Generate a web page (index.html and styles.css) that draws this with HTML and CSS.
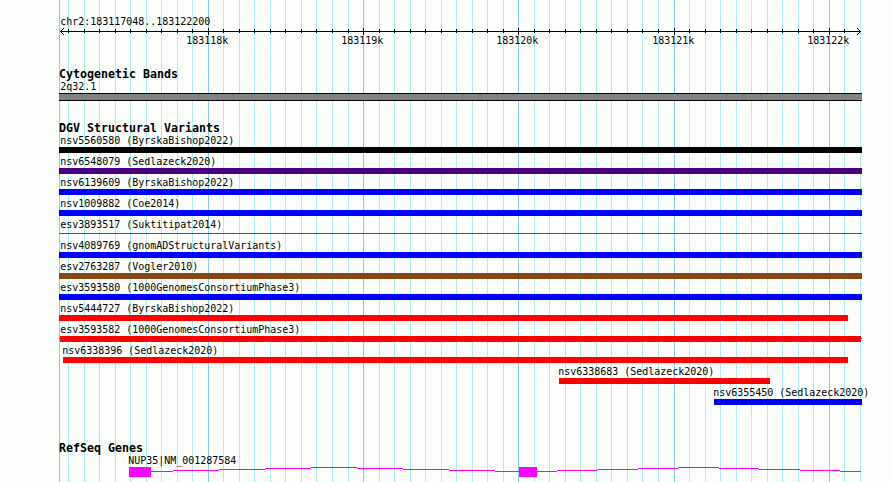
FILE: index.html
```
<!DOCTYPE html>
<html lang="en">
<head>
<meta charset="utf-8">
<title>chr2:183117048..183122200</title>
<link rel="stylesheet" href="styles.css">
</head>
<body>
<main class="browser">
  <svg class="grid" width="890" height="482" shape-rendering="crispEdges" aria-hidden="true">
    <path class="minor" d="M68.5 0V482M84.5 0V482M99.5 0V482M115.5 0V482M130.5 0V482M146.5 0V482M161.5 0V482M177.5 0V482M192.5 0V482M223.5 0V482M239.5 0V482M254.5 0V482M270.5 0V482M285.5 0V482M301.5 0V482M316.5 0V482M332.5 0V482M348.5 0V482M379.5 0V482M394.5 0V482M410.5 0V482M425.5 0V482M441.5 0V482M456.5 0V482M472.5 0V482M487.5 0V482M503.5 0V482M534.5 0V482M549.5 0V482M565.5 0V482M580.5 0V482M596.5 0V482M611.5 0V482M627.5 0V482M642.5 0V482M658.5 0V482M689.5 0V482M705.5 0V482M720.5 0V482M736.5 0V482M751.5 0V482M767.5 0V482M782.5 0V482M798.5 0V482M813.5 0V482M844.5 0V482M860.5 0V482"/>
    <path class="major" d="M59.5 0V482M208.5 0V482M363.5 0V482M518.5 0V482M674.5 0V482M829.5 0V482"/>
  </svg>

  <header class="ruler">
    <div class="label">chr2:183117048..183122200</div>
    <svg class="axis" width="803" height="20" shape-rendering="crispEdges">
      <path d="M1 4.5H802M9.5 2V6M25.5 2V6M40.5 2V6M56.5 2V6M71.5 2V6M87.5 2V6M102.5 2V6M118.5 2V6M133.5 2V6M164.5 2V6M180.5 2V6M195.5 2V6M211.5 2V6M226.5 2V6M242.5 2V6M257.5 2V6M273.5 2V6M289.5 2V6M320.5 2V6M335.5 2V6M351.5 2V6M366.5 2V6M382.5 2V6M397.5 2V6M413.5 2V6M428.5 2V6M444.5 2V6M475.5 2V6M490.5 2V6M506.5 2V6M521.5 2V6M537.5 2V6M552.5 2V6M568.5 2V6M583.5 2V6M599.5 2V6M630.5 2V6M646.5 2V6M661.5 2V6M677.5 2V6M692.5 2V6M708.5 2V6M723.5 2V6M739.5 2V6M754.5 2V6M785.5 2V6M149.5 1V8M304.5 1V8M459.5 1V8M615.5 1V8M770.5 1V8"/>
      <path d="M2 3.5H3M3 2.5H4M4 1.5H5M2 5.5H3M3 6.5H4M4 7.5H5M800 3.5H801M799 2.5H800M798 1.5H799M800 5.5H801M799 6.5H800M798 7.5H799"/>
      <g class="tick-text">
        <text x="127.3" y="17">183118k</text>
        <text x="282.3" y="17">183119k</text>
        <text x="437.3" y="17">183120k</text>
        <text x="593.3" y="17">183121k</text>
        <text x="748.3" y="17">183122k</text>
      </g>
    </svg>
  </header>

  <section class="track cyto">
    <h2>Cytogenetic Bands</h2>
    <div class="label">2q32.1</div>
    <div class="band"></div>
  </section>

  <section class="track variants">
    <h2>DGV Structural Variants</h2>
    <div class="row"><div class="label">nsv5560580 (ByrskaBishop2022)</div><div class="bar black"></div></div>
    <div class="row"><div class="label">nsv6548079 (Sedlazeck2020)</div><div class="bar purple"></div></div>
    <div class="row"><div class="label">nsv6139609 (ByrskaBishop2022)</div><div class="bar blue"></div></div>
    <div class="row"><div class="label">nsv1009882 (Coe2014)</div><div class="bar blue"></div></div>
    <div class="row"><div class="label">esv3893517 (Suktitipat2014)</div><div class="bar thin"></div></div>
    <div class="row"><div class="label">nsv4089769 (gnomADStructuralVariants)</div><div class="bar blue"></div></div>
    <div class="row"><div class="label">esv2763287 (Vogler2010)</div><div class="bar brown"></div></div>
    <div class="row"><div class="label">esv3593580 (1000GenomesConsortiumPhase3)</div><div class="bar blue"></div></div>
    <div class="row to-848"><div class="label">nsv5444727 (ByrskaBishop2022)</div><div class="bar red"></div></div>
    <div class="row"><div class="label">esv3593582 (1000GenomesConsortiumPhase3)</div><div class="bar red-open"><i></i></div></div>
    <div class="row to-848 indent-4"><div class="label">nsv6338396 (Sedlazeck2020)</div><div class="bar red"></div></div>
    <div class="row mid"><div class="label">nsv6338683 (Sedlazeck2020)</div><div class="bar red"></div></div>
    <div class="row end"><div class="label">nsv6355450 (Sedlazeck2020)</div><div class="bar blue"></div></div>
  </section>

  <section class="track genes">
    <h2>RefSeq Genes</h2>
    <div class="label gene-label">NUP35|NM_001287584</div>
    <svg class="gene" width="803" height="10" shape-rendering="crispEdges">
      <path class="intron" d="M92 4.5H114M114 3.5H160M160 2.5H206M206 1.5H252M252 .5H298M298 1.5H344M344 2.5H390M390 3.5H436M436 4.5H460M478 4.5H498M498 3.5H538M538 2.5H579M579 1.5H619M619 .5H660M660 1.5H700M700 2.5H741M741 3.5H781M781 4.5H802"/>
      <rect x="70" width="22" height="10"/>
      <rect x="460" width="18" height="10"/>
    </svg>
  </section>
</main>
</body>
</html>
```
FILE: styles.css
```
* { box-sizing: border-box; }
body { margin: 0; background: #fcfefc; color: #000; }
.browser {
  position: relative;
  width: 890px;
  height: 482px;
  padding-left: 59px;
  overflow: hidden;
  font: 10px/11px "DejaVu Sans Mono", monospace;
  letter-spacing: -0.02px;
}
svg { display: block; fill: none; }
.grid { position: absolute; inset: 0; z-index: -1; }
.minor { stroke: #afeeee; }
.major { stroke: #87ceeb; }

.label { height: 11px; padding-left: 1.3px; white-space: pre; }
h2 {
  margin: 0;
  height: 12px;
  font-size: 11.63px;
  line-height: 12px;
  font-weight: bold;
  letter-spacing: 0;
  white-space: pre;
}

.ruler { height: 68px; padding-top: 16px; }
.axis { stroke: #000; }
.tick-text { fill: #000; stroke: none; }

.track { width: 803px; }
.cyto { height: 54px; }
.cyto .label { margin-top: 1px; }
.band {
  height: 8px;
  margin-top: 1px;
  background: #848284;
  border: solid #000;
  border-width: 1px 0;
}

.variants { height: 320px; }
.variants h2, .genes h2 { margin-bottom: 1px; }
.variants .label, .genes .label { height: 12px; }
.row { height: 21px; }
.bar { height: 6px; }
.row.to-848 { width: 789px; }
.row.indent-4 { padding-left: 4px; }
.row.mid { width: 211px; margin-left: 500px; }
.row.end { width: 148px; margin-left: 655px; }
.indent-4 .label, .mid .label, .end .label { padding-left: 0; margin-left: -0.7px; }

.black { background: #000; }
.purple { background: #4b0082; }
.blue { background: #00f; }
.brown { background: #8b4513; }
.red { background: #f00; }
.thin { height: 1px; margin-top: 2px; background: #8b4513; }
.thin { transform: none; }
.red-open { padding-top: 2px; }
.red-open::before { content: ""; display: block; height: 1px; background: #f00; }
.red-open i { display: block; height: 6px; margin: -3px 1px 0; background: #f00; }

.genes .gene-label { padding-left: 69.3px; }
.gene { fill: #f0f; }
.intron { stroke: #f0f; }
```
